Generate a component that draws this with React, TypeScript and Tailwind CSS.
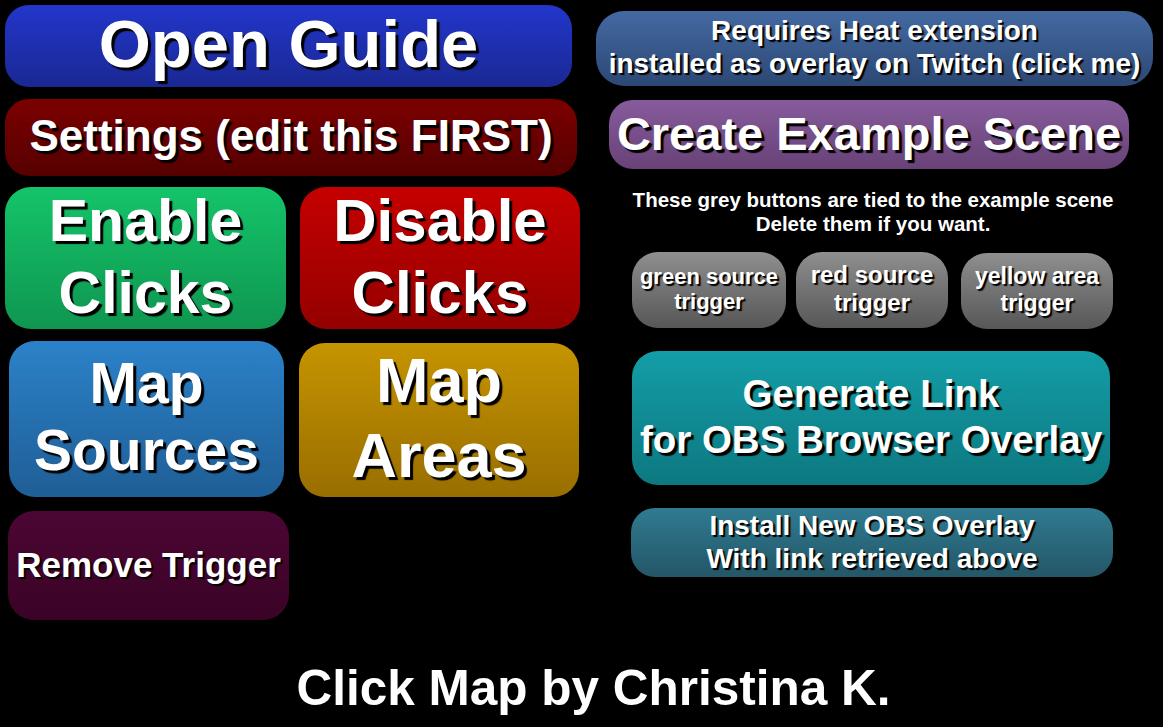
import React from 'react';

type BtnProps = {
  label: React.ReactNode;
  className: string;
  text: string;
};

const Btn: React.FC<BtnProps> = ({ label, className, text }) => (
  <div className={`flex shrink-0 items-center justify-center text-center font-bold text-white ${className} ${text}`}>
    <span>{label}</span>
  </div>
);

export default function App() {
  return (
    <div className="w-[1163px] h-[727px] bg-black overflow-hidden font-['Liberation_Sans',Arial,sans-serif]">
      <div className="flex">
        {/* left side */}
        <div className="flex flex-col w-[591px] pl-[5px] pt-[5px]">
          <Btn
            label="Open Guide"
            className="w-[567px] h-[82px] rounded-[24px] bg-gradient-to-b from-[#2236cb] to-[#1a2893] pb-[6px]"
            text="text-[67px] leading-none [text-shadow:3px_3px_1px_#000]"
          />
          <Btn
            label="Settings (edit this FIRST)"
            className="mt-[12px] w-[572px] h-[77px] rounded-[24px] bg-gradient-to-b from-[#7c0000] to-[#560000] pb-[4px]"
            text="text-[44px] leading-none [text-shadow:3px_3px_1px_#000]"
          />
          <div className="mt-[11px] flex gap-[14px]">
            <Btn
              label={<>Enable<br />Clicks</>}
              className="w-[281px] h-[142px] rounded-[26px] bg-gradient-to-b from-[#14c46a] to-[#0f9650] pb-[3px]"
              text="text-[59px] leading-[72px] [text-shadow:3px_3px_1px_#000]"
            />
            <Btn
              label={<>Disable<br />Clicks</>}
              className="w-[280px] h-[142px] rounded-[26px] bg-gradient-to-b from-[#c60000] to-[#940000] pb-[3px]"
              text="text-[60px] leading-[72px] [text-shadow:3px_3px_1px_#000]"
            />
          </div>
          <div className="mt-[12px] flex items-end">
            <Btn
              label={<>Map<br />Sources</>}
              className="ml-[4px] w-[275px] h-[156px] rounded-[26px] bg-gradient-to-b from-[#2b82c9] to-[#1f5e96] pb-[4px]"
              text="text-[57px] leading-[67px] [text-shadow:3px_3px_1px_#000]"
            />
            <Btn
              label={<>Map<br />Areas</>}
              className="ml-[15px] w-[280px] h-[154px] rounded-[26px] bg-gradient-to-b from-[#c69400] to-[#986e00] pb-[4px]"
              text="text-[63px] leading-[75px] [text-shadow:3px_3px_1px_#000]"
            />
          </div>
          <Btn
            label="Remove Trigger"
            className="mt-[14px] ml-[3px] w-[281px] h-[109px] rounded-[26px] bg-gradient-to-b from-[#4c0634] to-[#3a0326] pb-[2px]"
            text="text-[35px] leading-none [text-shadow:2px_2px_1px_#000]"
          />
        </div>

        {/* right side */}
        <div className="flex flex-col w-[572px] pl-[5px] pt-[11px]">
          <Btn
            label={<>Requires Heat extension<br />installed as overlay on Twitch (click me)</>}
            className="w-[557px] h-[75px] rounded-[28px] bg-gradient-to-b from-[#4469a2] to-[#2c4874] pb-[3px]"
            text="text-[28px] leading-[33px] [text-shadow:2px_2px_1px_#000]"
          />
          <Btn
            label="Create Example Scene"
            className="mt-[14px] ml-[13px] w-[520px] h-[69px] rounded-[24px] bg-gradient-to-b from-[#875b9c] to-[#684277] pb-[3px]"
            text="text-[47px] leading-none [text-shadow:3px_3px_1px_#000]"
          />
          <div className="mt-[19px] ml-[34px] w-[486px] text-center font-bold text-white text-[20.5px] leading-[24px] [text-shadow:2px_2px_1px_#000]">
            These grey buttons are tied to the example scene
            <br />
            Delete them if you want.
          </div>
          <div className="mt-[16px] ml-[36px] flex items-start">
            <Btn
              label={<>green source<br />trigger</>}
              className="w-[154px] h-[76px] rounded-[26px] bg-gradient-to-b from-[#8f8f8f] to-[#575757] pb-[2px]"
              text="text-[22px] leading-[25px] [text-shadow:2px_2px_1px_#000]"
            />
            <Btn
              label={<>red source<br />trigger</>}
              className="ml-[10px] w-[152px] h-[76px] rounded-[26px] bg-gradient-to-b from-[#8f8f8f] to-[#575757] pb-[2px]"
              text="text-[24px] leading-[28px] [text-shadow:2px_2px_1px_#000]"
            />
            <Btn
              label={<>yellow area<br />trigger</>}
              className="ml-[13px] mt-[1px] w-[152px] h-[76px] rounded-[26px] bg-gradient-to-b from-[#8f8f8f] to-[#575757] pb-[2px]"
              text="text-[23px] leading-[27px] [text-shadow:2px_2px_1px_#000]"
            />
          </div>
          <Btn
            label={<>Generate Link<br />for OBS Browser Overlay</>}
            className="mt-[22px] ml-[36px] w-[478px] h-[134px] rounded-[26px] bg-gradient-to-b from-[#139ea7] to-[#0d7880] pb-[3px]"
            text="text-[38.5px] leading-[46px] [text-shadow:3px_3px_1px_#000]"
          />
          <Btn
            label={<>Install New OBS Overlay<br />With link retrieved above</>}
            className="mt-[23px] ml-[35px] w-[482px] h-[69px] rounded-[24px] bg-gradient-to-b from-[#2f7b91] to-[#245667] pb-[2px]"
            text="text-[28px] leading-[33px] [text-shadow:2px_2px_1px_#000]"
          />
        </div>
      </div>

      <div className="mt-[40px] pl-[24px] text-center font-bold text-white text-[49.5px] leading-[56px]">
        Click Map by Christina K.
      </div>
    </div>
  );
}
